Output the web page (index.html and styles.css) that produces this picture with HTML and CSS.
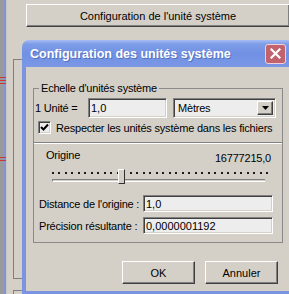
FILE: index.html
```html
<!DOCTYPE html>
<html>

<head>
    <title>Configuration des unités système</title>
    <link rel="stylesheet" href="styles.css">
</head>

<body>
    <div class="screen">
        <div class="left">
            <div class="edge">
                <div class="marks marks-top"></div>
                <div class="marks marks-low"></div>
            </div>
            <div class="gutter">
                <div class="gline"></div>
                <div class="gline gline-next"></div>
            </div>
        </div>

        <div class="main">
            <div class="topbar">
                <button class="btn wide">Configuration de l'unité système</button>
            </div>

            <div class="dialog">
                <div class="titlebar">
                    <span class="title">Configuration des unités système</span>
                    <span class="close">
                        <svg width="11" height="11" viewBox="0 0 11 11">
                            <path d="M1.5 1.5 L9.5 9.5 M9.5 1.5 L1.5 9.5" stroke="#fff" stroke-width="2.2" stroke-linecap="square" />
                        </svg>
                    </span>
                </div>

                <div class="dbody">
                    <fieldset class="group">
                        <legend>Echelle d'unités système</legend>

                        <div class="unit-row">
                            <span class="unit-label">1 Unité =</span>
                            <input class="field unit-value" type="text" value="1,0">
                            <div class="field select">
                                <span>Mètres</span>
                                <span class="drop">
                                    <svg width="7" height="4" viewBox="0 0 7 4">
                                        <path d="M0 0 H7 L3.5 4 Z" fill="#000" />
                                    </svg>
                                </span>
                            </div>
                        </div>

                        <div class="check-row">
                            <span class="field check">
                                <svg width="9" height="9" viewBox="0 0 9 9">
                                    <path d="M1 4 L3.5 6.5 L8 1.5" stroke="#000" stroke-width="2" fill="none" />
                                </svg>
                            </span>
                            Respecter les unités système dans les fichiers
                        </div>

                        <div class="origin">
                            <div class="origin-head">
                                <span>Origine</span>
                                <span class="origin-value">16777215,0</span>
                            </div>

                            <div class="slider">
                                <div class="ticks"></div>
                                <div class="track"></div>
                                <div class="thumb"></div>
                            </div>

                            <div class="field-row">
                                <span class="field-label">Distance de l'origine :</span>
                                <input class="field long" type="text" value="1,0">
                            </div>
                            <div class="field-row second">
                                <span class="field-label">Précision résultante :</span>
                                <input class="field long" type="text" value="0,0000001192">
                            </div>
                        </div>
                    </fieldset>

                    <div class="buttons">
                        <button class="btn">OK</button>
                        <button class="btn">Annuler</button>
                    </div>
                </div>
            </div>
        </div>
    </div>
</body>

</html>
```

FILE: styles.css
```css
body {
    margin: 0;
    width: 289px;
    height: 294px;
    overflow: hidden;
    background-color: #d4d0c8;
    font-family: "Liberation Sans", Arial, sans-serif;
    font-size: 11px;
    letter-spacing: -0.2px;
    color: #000;
}

.screen {
    display: flex;
    height: 294px;
    overflow: hidden;
}

/* left side of the window behind the dialog */
.left {
    width: 22px;
    flex: none;
    display: flex;
}

.edge {
    width: 7px;
    display: flex;
    flex-direction: column;
    background: linear-gradient(to right, #9a9a9a 0 4px, #8494d8 4px 6px, #c9c7c1 6px 7px);
}

.marks {
    width: 6px;
    height: 9px;
    background: repeating-linear-gradient(#cc3636 0 1px, transparent 1px 3px);
}

.marks-top {
    margin-top: 77px;
}

.marks-low {
    margin-top: 71px;
    height: 5px;
}

.gutter {
    flex: 1;
    padding: 59px 0 0 6px;
}

.gline {
    height: 218px;
    border: 1px solid #808080;
    border-right: none;
}

.gline-next {
    margin-top: 11px;
    height: 10px;
    border-bottom: none;
}

.main {
    width: 272px;
    flex: none;
}

.topbar {
    height: 40px;
    box-sizing: border-box;
    padding: 4px 0 0 4px;
}

/* classic raised button */
.btn {
    box-sizing: border-box;
    margin: 0;
    padding: 0;
    height: 23px;
    width: 73px;
    background-color: #d4d0c8;
    border: 1px solid;
    border-color: #fff #404040 #404040 #fff;
    box-shadow: inset -1px -1px 0 #808080;
    font: inherit;
    color: #000;
}

.btn.wide {
    width: 264px;
}

/* dialog window */
.dialog {
    width: 272px;
}

.titlebar {
    height: 27px;
    box-sizing: border-box;
    padding: 0 8px 0 8px;
    display: flex;
    align-items: center;
    justify-content: space-between;
    border-radius: 7px 7px 0 0;
    background: linear-gradient(#a6bcf3, #7e9de8 4px, #7090e3 50%, #7b98e6);
}

.title {
    color: #fff;
    font-weight: bold;
    font-size: 12.5px;
    letter-spacing: 0;
    text-shadow: 1px 1px 0 #5470c0;
}

.close {
    width: 21px;
    height: 20px;
    box-sizing: border-box;
    display: flex;
    align-items: center;
    justify-content: center;
    border: 1px solid #f0d2d6;
    border-radius: 3px;
    background-color: #c2626c;
}

.dbody {
    height: 227px;
    box-sizing: border-box;
    padding: 15px 7px 0;
    border: 4px solid #7b94e2;
    border-top: none;
    border-bottom-width: 3px;
    background-color: #d4d0c8;
}

.group {
    margin: 0;
    padding: 0;
    border: 1px solid #8a8a8a;
}

.group legend {
    margin-left: 5px;
    padding: 0 2px;
    line-height: 12px;
}

/* sunken text field */
.field {
    box-sizing: border-box;
    margin: 0;
    padding: 0 2px;
    border: 1px solid;
    border-color: #808080 #fff #fff #808080;
    box-shadow: inset 1px 1px 0 #404040, inset -1px -1px 0 #d4d0c8;
    background-color: #ededed;
    font: inherit;
    color: #000;
    outline: none;
}

.unit-row {
    display: flex;
    align-items: center;
    height: 20px;
    margin-top: 4px;
}

.unit-label {
    width: 54px;
    padding-left: 1px;
    box-sizing: border-box;
}

.unit-value {
    width: 79px;
    height: 20px;
}

.select {
    width: 103px;
    height: 20px;
    margin-left: 6px;
    padding: 0 2px 0 4px;
    display: flex;
    align-items: center;
    justify-content: space-between;
}

.drop {
    width: 16px;
    height: 14px;
    box-sizing: border-box;
    display: flex;
    align-items: center;
    justify-content: center;
    background-color: #d4d0c8;
    border: 1px solid;
    border-color: #fff #404040 #404040 #fff;
    box-shadow: inset -1px -1px 0 #808080;
}

.check-row {
    display: flex;
    align-items: center;
    height: 13px;
    margin-top: 3px;
    padding-left: 4px;
}

.check {
    width: 13px;
    height: 13px;
    padding: 0;
    margin-right: 5px;
    display: flex;
    align-items: center;
    justify-content: center;
}

.origin {
    margin-top: 8px;
    height: 100px;
    box-sizing: border-box;
    border-top: 1px solid #808080;
    box-shadow: inset 0 1px 0 #fff;
}

.origin-head {
    display: flex;
    justify-content: space-between;
    align-items: flex-start;
    margin-top: 6px;
    padding: 0 11px 0 12px;
    line-height: 13px;
}

.origin-value {
    margin-top: 3px;
}

.slider {
    position: relative;
    width: 216px;
    margin: 7px 0 0 18px;
}

.ticks {
    height: 2px;
    background: repeating-linear-gradient(to right, #1a1a1a 0 2px, transparent 2px 6.5px);
}

.track {
    width: 213px;
    height: 3px;
    margin-top: 5px;
    box-sizing: border-box;
    border-top: 1px solid #808080;
    border-bottom: 1px solid #fff;
    border-left: 1px solid #808080;
}

.thumb {
    position: absolute;
    left: 66px;
    top: -3px;
    width: 7px;
    height: 15px;
    box-sizing: border-box;
    background-color: #d4d0c8;
    border: 1px solid;
    border-color: #fff #303030 #303030 #fff;
}

.field-row {
    display: flex;
    align-items: center;
    margin-top: 13px;
    padding-left: 5px;
}

.field-row.second {
    margin-top: 5px;
}

.field-label {
    width: 104px;
}

.long {
    width: 130px;
    height: 17px;
}

.buttons {
    display: flex;
    justify-content: flex-end;
    gap: 10px;
    margin-top: 18px;
    padding-right: 5px;
}
```
